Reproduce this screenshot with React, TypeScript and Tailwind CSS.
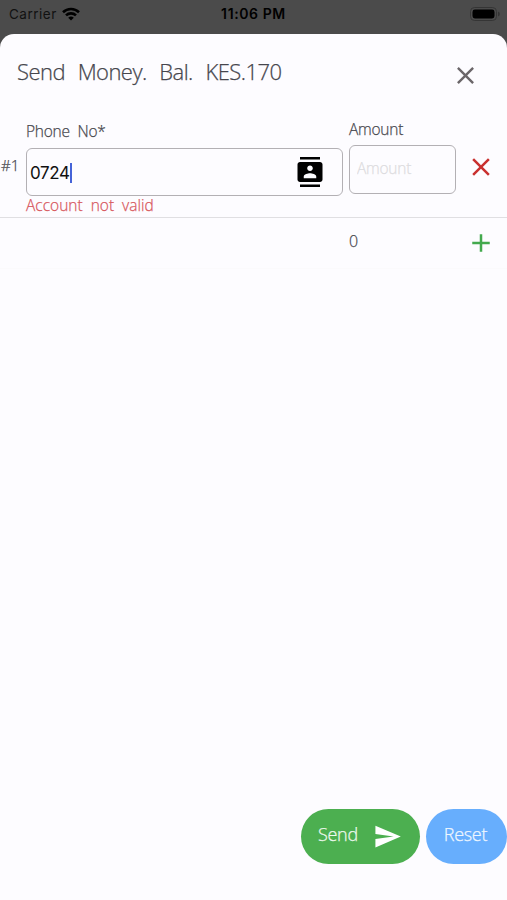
import { useState } from 'react';
import type { ReactNode } from 'react';
import { MdAdd, MdClose, MdContacts, MdSend } from 'react-icons/md';

// ============================================================
// Status bar
// ============================================================
function StatusBar() {
  return (
    <div className="grid h-[34px] grid-cols-3 items-start px-2 pt-[5px] font-['Inter',sans-serif] font-normal text-black">
      <div className="flex items-center gap-[5px] pl-px">
        <span className="w-[48px] text-[13.5px] leading-[18px] tracking-[0.5px] text-[#111]">Carrier</span>
        <svg width="18" height="14" viewBox="0 0 18 14" fill="none" stroke="currentColor" strokeWidth="2.6">
          <path d="M1 5.2a11.6 11.6 0 0 1 16 0" />
          <path d="M4 8.4a7.2 7.2 0 0 1 10 0" />
          <path d="M9 13.6 6.2 10.8a4 4 0 0 1 5.6 0z" fill="currentColor" stroke="none" />
        </svg>
      </div>
      <span className="text-center text-[14px] leading-[18px] font-semibold tracking-[0.6px]">11:06 PM</span>
      <div className="flex h-[17px] items-center justify-end">
        <svg className="-mr-0.5" width="31" height="14" viewBox="0 0 31 14">
          <rect x="0.5" y="0.5" width="26" height="13" rx="4" fill="none" stroke="#353535" />
          <rect x="2.5" y="2.5" width="22" height="9" rx="2.4" />
          <path d="M28 4.5v5a2.6 2.6 0 0 0 0-5z" fill="#353535" />
        </svg>
      </div>
    </div>
  );
}

function Label({ children }: { children: ReactNode }) {
  return (
    <div className="text-[15.5px] leading-5 tracking-[-0.25px] [word-spacing:4px] text-[#4a4a50]">{children}</div>
  );
}

// ============================================================
// Send money sheet
// ============================================================
export default function App() {
  const [phone, setPhone] = useState('0724');
  const [amount, setAmount] = useState('');

  return (
    <div className="flex h-[900px] w-[507px] flex-col overflow-hidden bg-[#4b4b4b] font-['Open_Sans','Noto_Sans',sans-serif] font-light">
      <StatusBar />
      <div className="flex flex-1 flex-col rounded-t-[14px] bg-[#fdfcff] [-webkit-text-stroke:0.25px]">
        <header className="flex h-[82px] items-center justify-between pr-[27px] pl-[17px]">
          <h1 className="mt-[-8px] text-[22px] leading-8 tracking-[-0.55px] [word-spacing:7.5px] text-[#46464d]">
            Send Money. Bal. KES.170
          </h1>
          <button aria-label="Close">
            <MdClose size={29} className="text-[#6b6669]" />
          </button>
        </header>

        <div className="flex h-[102px] border-b border-[#e0dfe2]">
          <div className="w-[26px] pt-[39px] pl-px text-[15px] leading-5 text-[#4a4a50]">#1</div>
          <div className="w-[317px] pt-[5px]">
            <Label>Phone No*</Label>
            <div className="mt-[7px] flex h-12 items-center justify-between rounded-md border-[1.5px] border-[#b3b0b4] pr-[17px] pl-[3px]">
              <div className="flex items-center pt-0.5">
                <input
                  value={phone}
                  onChange={(e) => setPhone(e.target.value)}
                  className="w-10 bg-transparent font-['Inter',sans-serif] text-[17px] leading-6 font-normal tracking-[-0.4px] text-[#111] outline-none [-webkit-text-stroke:0]"
                />
                <span className="h-5 w-0.5 bg-[#4563d8]" />
              </div>
              <MdContacts size={30} className="text-black" />
            </div>
            <div className="text-[15.5px] leading-[18px] [word-spacing:4px] text-[#d8595f]">Account not valid</div>
          </div>
          <div className="ml-1.5 w-[107px] pt-[3px]">
            <Label>Amount</Label>
            <input
              value={amount}
              onChange={(e) => setAmount(e.target.value)}
              placeholder="Amount"
              className="mt-1.5 block h-[49px] w-full rounded-md border-[1.5px] border-[#b3b0b4] bg-transparent pr-2 pb-1 pl-[7px] text-[15.5px] tracking-[-0.25px] outline-none placeholder:text-[#dddce0]"
            />
          </div>
          <button aria-label="Remove row" className="ml-2.5 h-[102px] w-[30px]">
            <MdClose size={30} className="text-[#c9302f]" />
          </button>
        </div>

        <div className="flex h-[51px] items-start border-b border-[#fbfafc] pl-[349px]">
          <span className="w-[117px] pt-[13px] text-[16px] leading-5 text-[#4a4a50]">0</span>
          <button aria-label="Add row" className="pt-2.5">
            <MdAdd size={30} className="text-[#43a94d]" />
          </button>
        </div>

        <footer className="mt-auto mb-9 flex justify-end gap-1.5">
          <button className="flex h-[55px] w-[119px] items-center rounded-full bg-[#4caf50] pl-[17px] text-[#eef9ee]">
            <span className="w-[55px] pb-1.5 text-left text-[18px] leading-6 tracking-[-0.3px]">Send</span>
            <MdSend size={29} className="text-white" />
          </button>
          <button className="h-[55px] w-[81px] rounded-full bg-[#67aefd] pr-0.5 pb-1.5 text-[18px] leading-6 tracking-[-0.3px] text-[#eef6ff]">
            Reset
          </button>
        </footer>
      </div>
    </div>
  );
}
